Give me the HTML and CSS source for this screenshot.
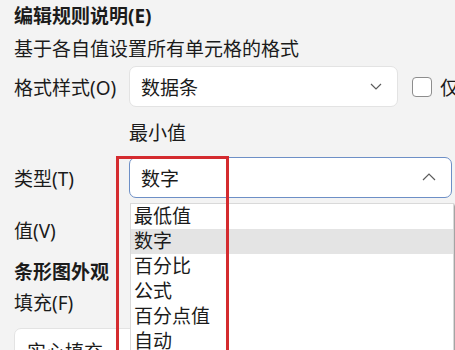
FILE: index.html
```html
<!DOCTYPE html>
<html lang="zh-CN">
<head>
<meta charset="UTF-8">
<title>编辑规则说明</title>
<link rel="stylesheet" href="styles.css">
</head>
<body>
  <div class="panel">
    <div class="title">编辑规则说明(E)</div>
    <div class="desc">基于各自值设置所有单元格的格式</div>

    <div class="row row-style">
      <div class="label">格式样式(O)</div>
      <div class="combo combo-style">
        <span>数据条</span>
        <svg class="chev" width="12" height="7" viewBox="0 0 12 7"><path d="M1 1l5 5 5-5" fill="none" stroke="#5c5c5c" stroke-width="1.2"/></svg>
      </div>
      <span class="check"></span>
      <span class="check-text">仅显示数据条</span>
    </div>

    <div class="sub">最小值</div>

    <div class="row row-type">
      <div class="label">类型(T)</div>
      <div class="combo combo-type open">
        <span>数字</span>
        <svg class="chev" width="14" height="8" viewBox="0 0 14 8"><path d="M1 7l6-6 6 6" fill="none" stroke="#5c5c5c" stroke-width="1.2"/></svg>
      </div>
    </div>

    <div class="line">值(V)</div>
    <div class="line bold">条形图外观</div>
    <div class="line fill-label">填充(F)</div>
    <div class="fill-box">实心填充</div>
  </div>

  <ul class="list">
    <li>最低值</li>
    <li class="hover">数字</li>
    <li>百分比</li>
    <li>公式</li>
    <li>百分点值</li>
    <li>自动</li>
  </ul>

  <div class="mark"></div>
</body>
</html>
```

FILE: styles.css
```css
html, body { margin: 0; height: 100%; overflow: hidden; }
body { background-color: #f3f3f3; color: #1b1b1b; font-family: "Noto Sans", "Noto Sans CJK SC", sans-serif; font-size: 19px; position: relative; }

.panel { padding: 4px 0 0 14px; }
.title { font-weight: bold; line-height: 25px; height: 25px; }
.desc { line-height: 25px; margin-top: 8px; white-space: nowrap; }

.row { display: flex; align-items: center; height: 41px; white-space: nowrap; }
.row-style { margin-top: 4px; }
.row-type { margin-top: 11px; }
.label { width: 115px; flex: none; }

.combo {
  box-sizing: border-box;
  height: 41px;
  display: flex;
  align-items: center;
  justify-content: space-between;
  padding: 0 15px 0 11px;
  background: #fff;
  border: 1px solid #e3e3e3;
  border-radius: 7px;
  flex: none;
}
.combo-style { width: 269px; }
.combo-type { width: 323px; }
.combo.open { border-color: #6d8fc6; }
.combo-type .chev { margin-top: -2px; }

.check {
  box-sizing: border-box;
  width: 20px;
  height: 20px;
  margin-left: 14px;
  border: 1px solid #8d8d8d;
  border-radius: 4px;
  background: #fff;
  flex: none;
}
.check-text { margin-left: 8px; }

.sub { line-height: 25px; margin-top: 14px; padding-left: 115px; }

.line { line-height: 25px; }
.row-type + .line { margin-top: 21px; }
.bold { font-weight: bold; margin-top: 16px; }
.fill-label { margin-top: 6px; }

.fill-box {
  box-sizing: border-box;
  margin-top: 12px;
  width: 200px;
  height: 42px;
  padding: 8px 0 0 12px;
  background: #fff;
  border: 1px solid #e3e3e3;
  border-radius: 7px;
}

/* dropdown overlay */
.list {
  position: absolute;
  top: 203px;
  left: 130px;
  width: 322px;
  margin: 0;
  padding: 0;
  list-style: none;
  background: #fff;
  border: 1px solid #d9d9d9;
  box-shadow: 2px 2px 2px rgba(0, 0, 0, 0.35);
}
.list li { height: 25px; line-height: 25px; padding-left: 3px; }
.list li.hover { background: #e4e4e4; }

/* red annotation frame */
.mark {
  position: absolute;
  top: 156px;
  left: 116px;
  width: 107px;
  height: 220px;
  border: 3px solid #d42b2f;
}
```
